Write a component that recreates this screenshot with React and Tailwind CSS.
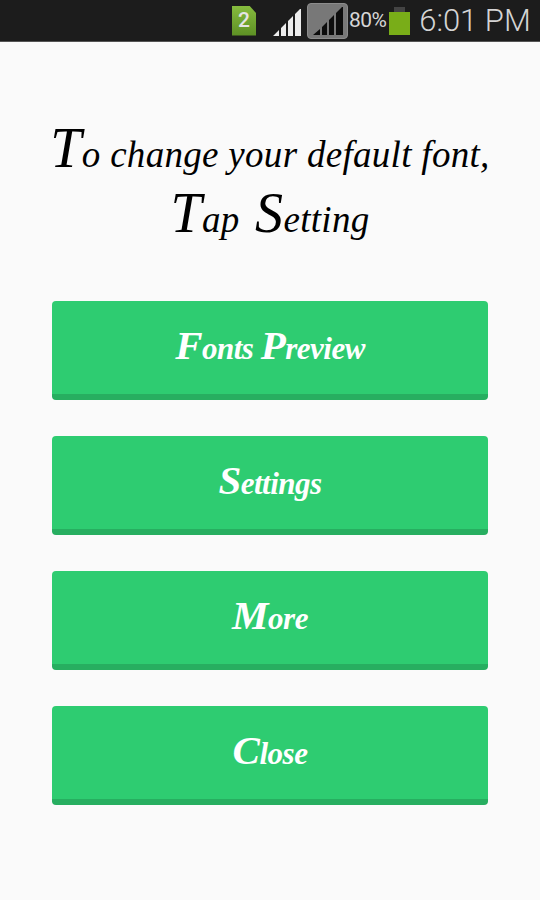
function Cap({ children }) {
  return <span className="text-[56px] leading-[0]">{children}</span>;
}

function BtnCap({ children }) {
  return <span className="text-[41px] leading-[0]">{children}</span>;
}

const labels = [
  <><BtnCap>F</BtnCap>onts <BtnCap>P</BtnCap>review</>,
  <><BtnCap>S</BtnCap>ettings</>,
  <><BtnCap>M</BtnCap>ore</>,
  <><BtnCap>C</BtnCap>lose</>,
];

function StatusBar() {
  return (
    <div className="h-[42px] bg-[#1c1c1c] flex items-center border-b border-[#555] shrink-0">
      <div className="ml-[232px] w-[24px] h-[30px] bg-gradient-to-b from-[#86bb3e] to-[#5d9024] [clip-path:polygon(0_0,72%_0,100%_25%,100%_100%,0_100%)] flex items-center justify-center text-[#e4e4e4] text-[21px] leading-none font-medium font-['Roboto',sans-serif]">2</div>
      <svg className="ml-[17px] mt-[3px]" width="28" height="27" viewBox="0 0 28 27" fill="#ececec">
        <path d="M0 27L6 21V27ZM8 19L13 14V27H8ZM15 12L20 7V27H15ZM22 5L27 0H28V27H22Z" />
      </svg>
      <div className="ml-[6px] w-[41px] h-[36px] mt-[1px] bg-[#787878] rounded-[4px] border border-[#8c8c8c] overflow-hidden">
        <svg width="39" height="34" viewBox="0 0 39 34" fill="#0d0d0d">
          <path d="M5 31L12 25V31ZM14 23L19 18V31H14ZM21 16L26 11V31H21ZM28 9L34 3H35V31H28Z" />
        </svg>
      </div>
      <span className="ml-[1px] text-[21px] leading-none text-[#d6d6d6] font-['Roboto',sans-serif] tracking-[-0.6px]">80%</span>
      <div className="ml-[3px] flex flex-col items-center mt-[1px]">
        <div className="w-[11px] h-[5px] bg-[#444]" />
        <div className="w-[21px] h-[23px] bg-[#79ad18]" />
      </div>
      <span className="ml-[9px] text-[31px] leading-none text-[#d4d4d4] font-['Roboto',sans-serif] font-light whitespace-nowrap">6:01 PM</span>
    </div>
  );
}

export default function App() {
  return (
    <div className="w-[540px] h-[900px] bg-[#fafafa] flex flex-col overflow-hidden">
      <StatusBar />
      <div className="flex flex-col items-center px-[52px]">
        <h1 className="mt-[80px] w-[500px] text-center text-black text-[37px] leading-[65px] italic font-normal font-['Liberation_Serif',serif] whitespace-nowrap tracking-[0.3px]">
          <Cap>T</Cap>o change your default font,
          <br />
          <span className="[word-spacing:6px]"><Cap>T</Cap>ap <Cap>S</Cap>etting</span>
        </h1>
        <div className="mt-[49px] w-full flex flex-col gap-[36px]">
          {labels.map((label, i) => (
            <button
              key={i}
              className="h-[99px] w-full pt-[4px] bg-[#2ecc71] rounded-[4px] border-b-[6px] border-[#27ae60] flex items-center justify-center text-white text-[31px] italic font-bold font-['Liberation_Serif',serif] tracking-[-0.5px]"
            >
              <span>{label}</span>
            </button>
          ))}
        </div>
      </div>
    </div>
  );
}
